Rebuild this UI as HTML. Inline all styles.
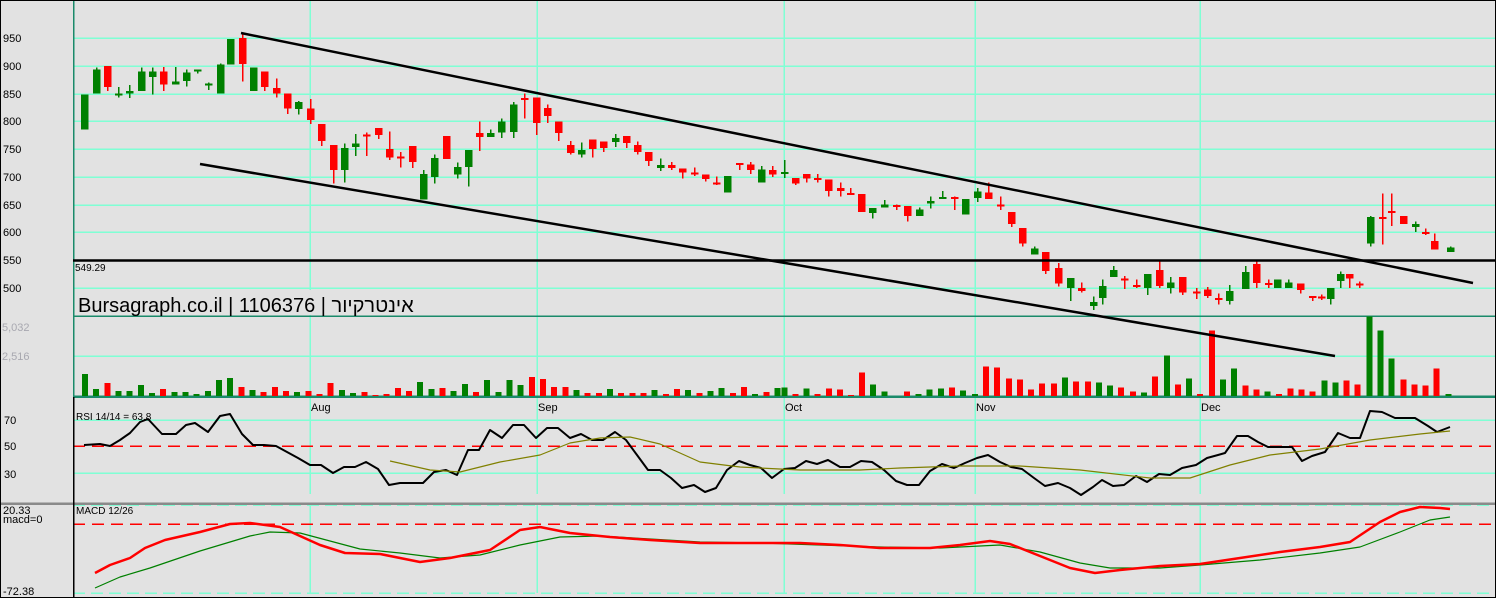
<!DOCTYPE html>
<html><head><meta charset="utf-8">
<style>
html,body{margin:0;padding:0;background:#e2e2e2;}
svg{display:block;font-family:"Liberation Sans",Arial,sans-serif;}
</style></head>
<body>
<svg id="s" width="1496" height="598" xmlns="http://www.w3.org/2000/svg">
<rect x="0" y="0" width="1496" height="598" fill="#e2e2e2"/>
<g id="grid" shape-rendering="crispEdges"></g>
<g id="c" shape-rendering="crispEdges"></g>
<g id="lines"></g>
<g id="txt" font-size="11" fill="#000"></g>
</svg>
<script>
const NS="http://www.w3.org/2000/svg";
function el(p,t,a,txt){const e=document.createElementNS(NS,t);for(const k in a)e.setAttribute(k,a[k]);if(txt!==undefined)e.textContent=txt;document.getElementById(p).appendChild(e);return e;}
const AQ="#7fffd4", DG="#1a8a6a";
[38,66,94,121,149,177,205,232,288].forEach(y=>el("grid","line",{x1:73,x2:1496,y1:y,y2:y,stroke:AQ,"stroke-width":1.5}));
el("grid","line",{x1:73,x2:1496,y1:356,y2:356,stroke:AQ,"stroke-width":1.5});
[420,473].forEach(y=>el("grid","line",{x1:73,x2:1496,y1:y,y2:y,stroke:AQ,"stroke-width":1.5}));
[505,593].forEach(y=>el("grid","line",{x1:73,x2:1496,y1:y,y2:y,stroke:AQ,"stroke-width":1.5,"stroke-dasharray":"12,6"}));
[310,537,784,975,1200].forEach(x=>{el("grid","line",{x1:x,x2:x,y1:0,y2:494,stroke:AQ,"stroke-width":1.5});el("grid","line",{x1:x,x2:x,y1:505,y2:593,stroke:AQ,"stroke-width":1.5});});
el("grid","line",{x1:73,x2:1496,y1:446,y2:446,stroke:"#ff0000","stroke-width":1.5,"stroke-dasharray":"12,7"});
el("grid","line",{x1:73,x2:1496,y1:524,y2:524,stroke:"#ff0000","stroke-width":1.5,"stroke-dasharray":"12,7"});
el("grid","line",{x1:73,x2:1496,y1:316,y2:316,stroke:DG,"stroke-width":1.5});
el("grid","line",{x1:73,x2:1496,y1:396.5,y2:396.5,stroke:DG,"stroke-width":2.5});
el("grid","line",{x1:0,x2:1496,y1:503.5,y2:503.5,stroke:"#8a8a8a","stroke-width":2.5});
el("grid","line",{x1:73.5,x2:73.5,y1:0,y2:397,stroke:DG,"stroke-width":1.5});
el("grid","line",{x1:73.5,x2:73.5,y1:397,y2:598,stroke:"#000","stroke-width":1.5});
el("grid","rect",{x:0.5,y:0.5,width:1495,height:597,fill:"none",stroke:"#000","stroke-width":1});

const C=[[84,785,848,848,785],[96,850,893,897,850],[107,900,862,900,855],[118,850,850,862,843],[129,850,855,865,842],[141,855,890,897,855],[152,880,890,897,848],[163,890,866,898,855],[175,866,872,898,866],[186,873,888,893,863],[197,890,893,893,886],[208,868,868,870,856],[220,850,902,904,850],[230,902,948,948,902],[242,950,903,960,872],[253,855,897,897,855],[264,890,862,890,855],[276,860,850,877,843],[287,850,823,850,813],[298,822,835,837,812],[310,823,802,840,795],[321,795,765,795,756],[333,757,712,757,688],[344,712,752,760,690],[355,754,760,777,738],[366,776,775,780,738],[378,788,775,788,768],[389,750,735,782,730],[400,737,735,745,717],[412,756,727,756,716],[423,659,705,712,659],[434,700,734,740,688],[446,774,732,774,732],[457,704,718,726,697],[468,718,748,748,683],[479,779,772,800,747],[490,772,779,785,772],[501,780,800,805,770],[513,781,830,835,770],[524,842,842,850,805],[536,843,797,843,775],[547,824,810,830,797],[558,800,779,800,765],[570,757,743,765,740],[581,740,748,762,735],[592,767,750,767,735],[603,764,752,764,745],[615,763,770,777,754],[626,774,761,774,752],[637,757,745,764,740],[648,745,729,745,720],[660,716,721,733,711],[671,721,716,727,712],[682,715,708,715,697],[694,708,708,717,702],[705,704,696,704,692],[716,690,690,701,685],[727,672,702,702,672],[739,725,722,725,712],[750,722,712,727,705],[761,690,713,720,690],[772,712,704,720,700],[784,705,709,730,698],[795,698,688,698,685],[806,705,697,705,690],[817,698,698,705,690],[828,695,675,695,665],[840,680,675,690,665],[850,671,671,680,668],[861,669,637,669,637],[872,635,644,644,625],[884,645,650,658,645],[896,649,649,650,640],[907,648,630,648,620],[919,630,641,645,630],[930,652,657,665,643],[942,660,664,675,660],[954,664,664,665,640],[965,632,660,660,632],[977,662,674,680,655],[988,672,660,690,660],[1000,650,650,665,640],[1011,637,615,637,610],[1022,608,580,608,575],[1034,560,571,575,560],[1045,565,531,565,525],[1058,536,508,545,503],[1070,500,518,518,477],[1081,500,495,510,492],[1093,468,475,485,460],[1102,482,504,515,470],[1113,520,532,540,520],[1124,517,517,522,498],[1136,505,503,515,500],[1147,500,525,525,487],[1159,532,504,550,500],[1170,500,510,520,490],[1182,520,492,520,487],[1196,494,494,500,480],[1207,497,486,502,482],[1218,482,482,490,470],[1229,477,495,505,470],[1245,498,529,540,498],[1256,543,509,550,500],[1268,509,509,515,500],[1277,500,515,515,500],[1288,500,510,515,500],[1300,508,496,508,490],[1312,486,483,486,477],[1321,485,485,488,478],[1330,480,500,500,470],[1340,513,525,530,500],[1349,525,517,525,500],[1359,508,508,512,500],[1370,580,628,630,575],[1382,628,628,670,578],[1391,639,639,670,612],[1403,630,615,630,615],[1415,610,615,620,601],[1425,601,601,607,595],[1434,585,569,598,569],[1450,565,573,575,565]];
const Y=p=>38+(950-p)*0.5556;
C.forEach(([x,o,c,h,l])=>{const cl=(c>o)?"#008000":(c<o?"#ff0000":(o>=850&&x<260?"#008000":"#ff0000"));
el("c","rect",{x:x,y:Y(h),width:1.5,height:Math.max(1,Y(l)-Y(h)),fill:cl});
const t=Math.min(Y(o),Y(c)),b=Math.max(Y(o),Y(c));
el("c","rect",{x:x-3,y:t,width:7.5,height:Math.max(2,b-t),fill:cl});});

const V1=[66,21,39,15,15,33,9,21,12,12,6,15,48,54,27,18,12,27,15,12,15,6,39,18,9,12,3,6,24,15,42,21,24,15,36,12,48,12,48,33,57,51,27,27,18,9,9,21,9,9,9,18,6,21,18,9,15,24,9,27,6,12,24];
V1.forEach((h,i)=>{const x=82+11.17*i;const cl=C[i]?((C[i][2]>=C[i][1])?"#008000":"#ff0000"):"#008000";
el("c","rect",{x:x,y:396-h/3,width:6,height:h/3,fill:cl});});
const V2=[[18,25,"g"],[42,6,"r"],[66,22,"g"],[91,6,"r"],[115,22,"r"],[139,19,"r"],[164,3,"r"],[188,70,"r"],[212,34,"g"],[237,13,"g"],[286,13,"r"],[311,6,"g"],[335,19,"g"],[360,22,"g"],[384,25,"r"],[408,16,"g"],[434,6,"g"],[458,88,"r"],[482,85,"r"],[508,52,"r"],[532,49,"r"],[556,19,"r"],[580,37,"r"],[606,37,"r"],[630,55,"g"],[654,43,"r"],[680,43,"r"],[704,40,"g"],[728,31,"g"],[752,25,"r"],[778,13,"r"],[802,10,"g"],[826,58,"r"],[852,121,"g"],[876,34,"r"],[900,52,"g"],[924,6,"r"],[950,196,"r"],[974,49,"g"],[998,82,"g"],[1024,31,"r"],[1048,19,"r"],[1072,13,"g"],[1096,6,"r"],[1122,22,"r"],[1146,19,"r"],[1170,13,"r"],[1196,46,"g"],[1220,40,"g"],[1244,46,"r"],[1268,34,"r"],[1294,238,"g"],[1318,196,"g"],[1342,112,"g"],[1368,49,"r"],[1392,34,"r"],[1416,31,"r"],[1440,82,"r"],[1466,6,"g"]];
V2.forEach(([X,h,c])=>{const x=776+X/2.18-3;el("c","rect",{x:x,y:396-h/3,width:6,height:h/3,fill:c=="g"?"#008000":"#ff0000"});});

el("lines","line",{x1:241,y1:33,x2:1473,y2:283,stroke:"#000","stroke-width":2.5});
el("lines","line",{x1:200,y1:164,x2:1335,y2:356,stroke:"#000","stroke-width":2.5});
el("lines","line",{x1:73,y1:260.5,x2:1496,y2:260.5,stroke:"#000","stroke-width":2.5});
function pl(pts,col,w){el("lines","polyline",{points:pts.map(p=>p.join(",")).join(" "),fill:"none",stroke:col,"stroke-width":w,"stroke-linejoin":"round"});}
pl([[84,445],[100,444],[110,446],[120,440],[130,433],[140,422],[148,419],[162,434],[176,434],[186,425],[195,423],[208,432],[220,416],[230,414],[242,434],[253,445],[264,445],[276,446],[287,452],[298,458],[310,465],[321,465],[333,473],[344,467],[355,467],[366,462],[378,469],[389,485],[400,483],[412,483],[423,483],[434,472],[446,470],[457,475],[468,450],[479,450],[490,430],[502,438],[513,425],[524,425],[536,438],[547,428],[558,428],[570,438],[581,434],[592,440],[603,440],[615,432],[626,440],[637,455],[648,470],[660,470],[671,478],[682,488],[694,485],[705,492],[716,488],[727,470],[739,461],[750,465],[761,468],[772,478],[784,469],[795,468],[806,461],[817,464],[828,460],[840,467],[850,467],[861,461],[872,462],[884,470],[896,481],[907,485],[919,485],[930,471],[942,464],[954,468],[965,463],[977,458],[988,455],[1000,462],[1011,467],[1022,469],[1034,478],[1045,486],[1058,483],[1070,488],[1081,495],[1093,487],[1102,480],[1113,486],[1124,485],[1136,476],[1147,482],[1159,474],[1170,475],[1182,468],[1196,465],[1207,458],[1218,455],[1225,453],[1237,436],[1248,436],[1258,442],[1268,447],[1292,447],[1302,461],[1312,456],[1325,452],[1338,433],[1350,438],[1360,438],[1370,411],[1382,412],[1395,418],[1415,418],[1428,426],[1437,432],[1450,427]],"#000",2);
pl([[390,461],[430,470],[460,472],[500,462],[540,455],[570,443],[600,438],[630,437],[660,444],[700,462],[740,467],[800,470],[860,470],[900,468],[960,466],[1020,466],[1080,470],[1150,478],[1190,478],[1230,465],[1270,455],[1320,449],[1370,440],[1420,434],[1450,431]],"#808000",1.2);
pl([[95,588],[120,577],[150,568],[200,551],[250,536],[270,532],[300,533],[330,541],[360,549],[400,553],[440,558],[480,555],[520,545],[560,537],[600,536],[650,539],[700,542],[760,543],[820,545],[880,547],[940,548],[1000,545],[1040,552],[1080,563],[1110,568],[1160,568],[1200,565],[1260,560],[1320,553],[1360,547],[1400,532],[1430,520],[1450,517]],"#008000",1.2);
pl([[95,573],[110,565],[130,558],[145,548],[165,540],[200,532],[230,524],[250,523],[280,527],[300,536],[320,545],[345,553],[380,554],[420,562],[450,558],[490,550],[520,530],[540,527],[570,533],[610,537],[650,540],[700,543],[760,543],[800,543],[840,545],[880,548],[930,548],[960,545],[990,541],[1010,544],[1040,556],[1070,568],[1095,573],[1120,570],[1160,566],[1200,564],[1240,558],[1280,552],[1320,547],[1350,542],[1380,522],[1400,512],[1420,507],[1440,508],[1450,509]],"#ff0000",2.5);

[[950,38],[900,66],[850,94],[800,121],[750,149],[700,177],[650,205],[600,232],[550,260],[500,288]].forEach(([v,y])=>el("txt","text",{x:3,y:y+4},String(v)));
el("txt","text",{x:2,y:331,fill:"#a8a8b0"},"5,032");
el("txt","text",{x:2,y:360,fill:"#a8a8b0"},"2,516");
el("txt","text",{x:4,y:424},"70");el("txt","text",{x:4,y:450},"50");el("txt","text",{x:4,y:478},"30");
el("txt","text",{x:3,y:514},"20.33");el("txt","text",{x:3,y:523},"macd=0");el("txt","text",{x:3,y:595},"-72.38");
el("txt","text",{x:75,y:271,"font-size":10},"549.29");
[["Aug",311],["Sep",538],["Oct",785],["Nov",976],["Dec",1201]].forEach(([t,x])=>el("txt","text",{x:x,y:411},t));
el("txt","text",{x:76,y:420,"font-size":10},"RSI 14/14 = 63.8");
el("txt","text",{x:76,y:514,"font-size":10},"MACD 12/26");
el("txt","rect",{x:76,y:290,width:330,height:25,fill:"#e2e2e2"});
el("txt","text",{x:78,y:312,"font-size":20,"font-family":"'Liberation Sans','Noto Sans CJK JP',sans-serif"},"Bursagraph.co.il | 1106376 | אינטרקיור");
</script>
</body></html>
